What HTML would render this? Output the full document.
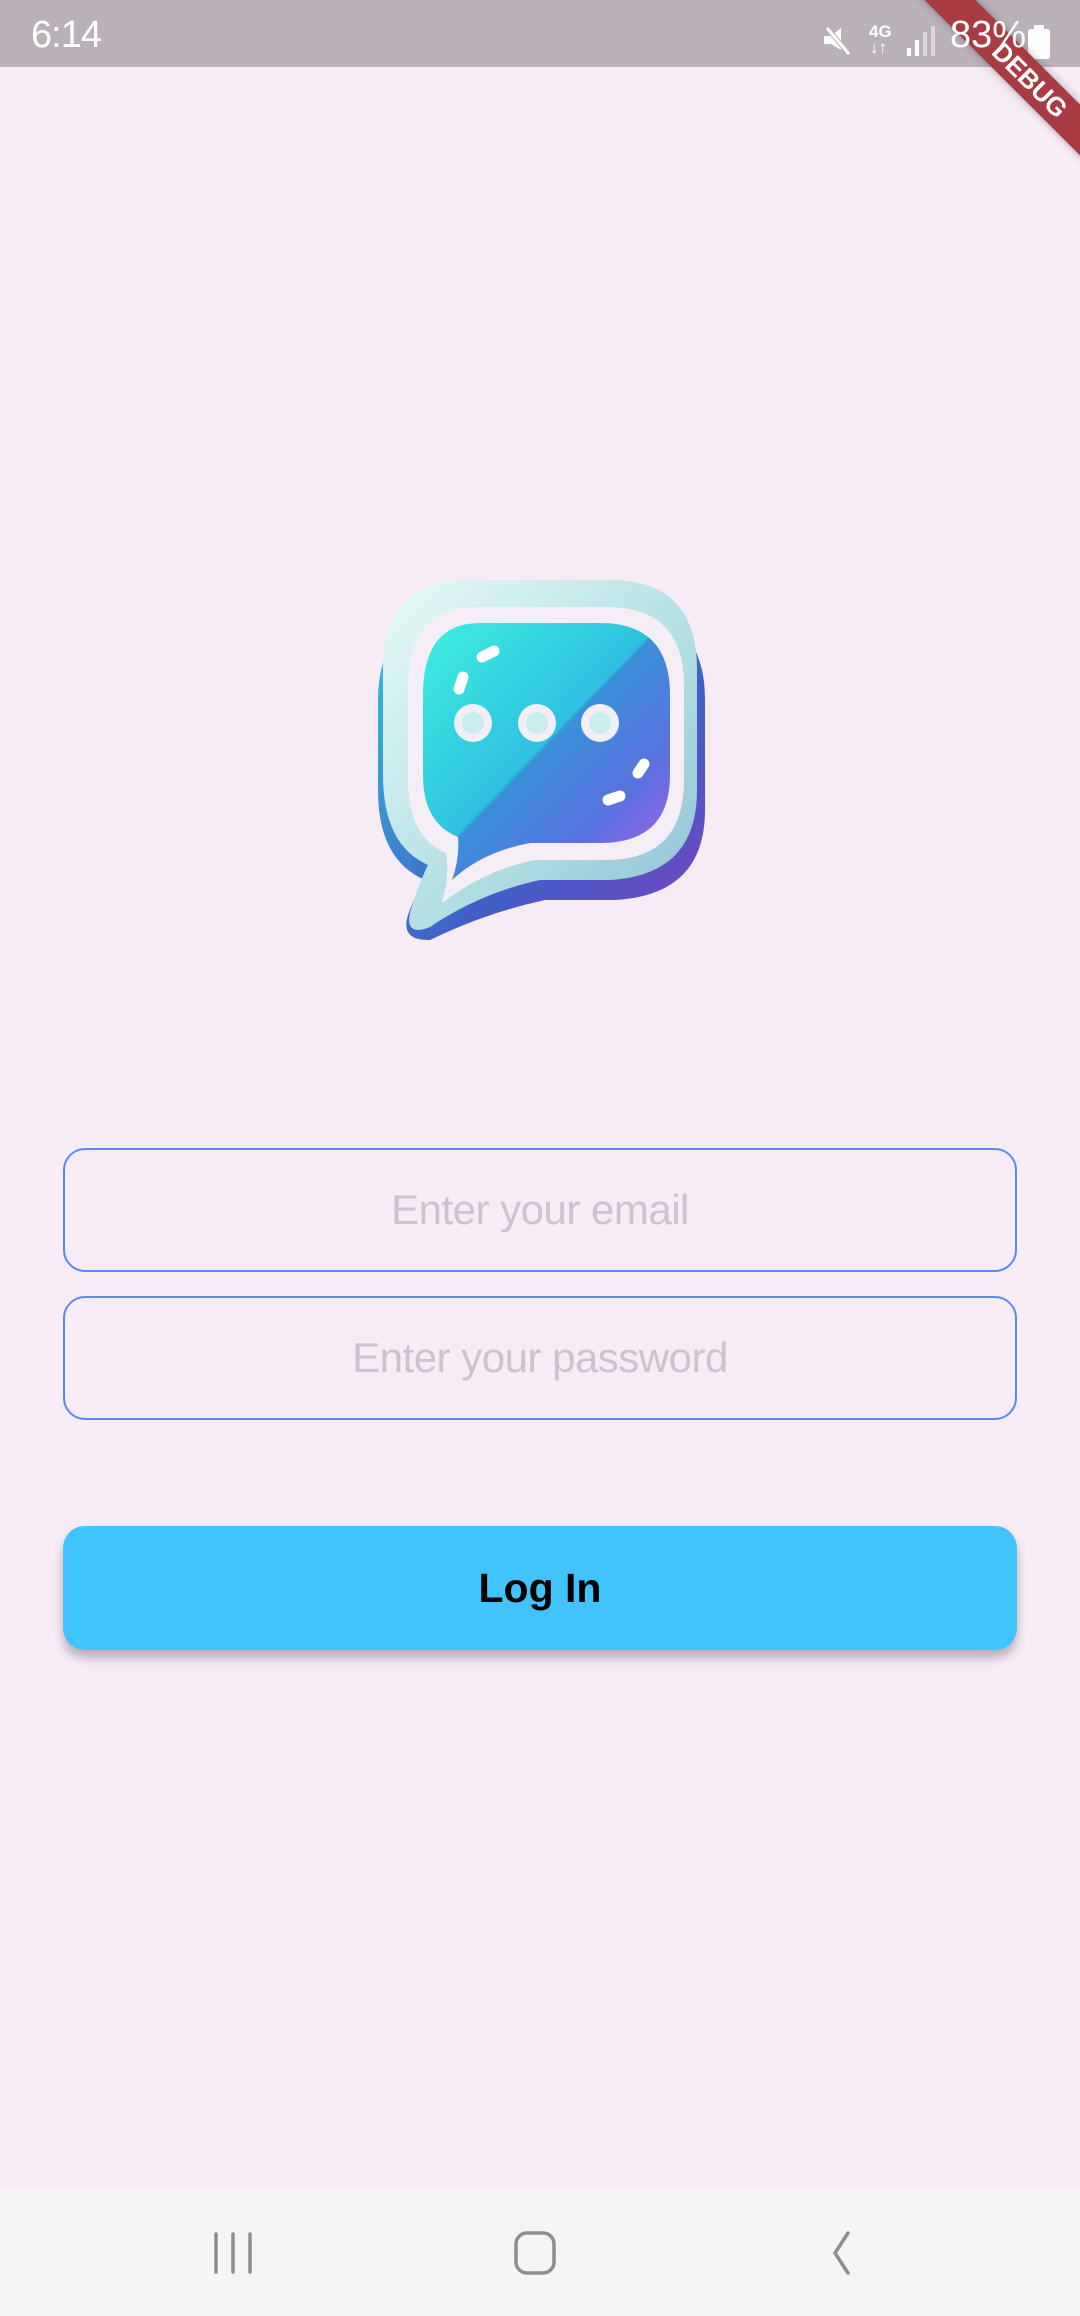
<!DOCTYPE html>
<html><head><meta charset="utf-8"><style>
*{margin:0;padding:0;box-sizing:border-box}
body{width:1080px;height:2316px;background:#f7ebf5;position:relative;overflow:hidden;font-family:"Liberation Sans",Roboto,sans-serif}
.sb{position:absolute;top:0;left:0;width:1080px;height:67px;background:#bab0b8;color:#fff}
.time{position:absolute;left:31px;top:14px;font-size:38px;letter-spacing:-1px}
.pct{position:absolute;left:950px;top:14px;font-size:38px;z-index:3}
.field{position:absolute;left:63px;width:954px;height:124px;border:2.5px solid #5a8ae8;border-radius:22px;color:#cbc3d0;font-size:42px;text-align:center;line-height:119px;letter-spacing:-0.5px}
.btn{position:absolute;left:63px;top:1526px;width:954px;height:124px;background:#41c4fe;border-radius:22px;box-shadow:0 8px 10px rgba(0,0,0,.25);text-align:center;line-height:124px;font-size:41px;font-weight:bold;color:#000}
.nav{position:absolute;left:0;top:2190px;width:1080px;height:126px;background:#f5f5f5}
.banner{position:absolute;left:880px;top:62px;width:300px;height:36px;background:#a83c42;transform:rotate(45deg);color:#fff;font-weight:bold;font-size:26px;text-align:center;line-height:36px;box-shadow:0 0 8px rgba(0,0,0,.3);z-index:2}
</style></head><body>
<div class="sb">
<div class="time">6:14</div>
<svg style="position:absolute;left:822px;top:26px" width="34" height="32" viewBox="0 0 34 32"><path d="M2 10h7l10-8v22L9 18H2z" fill="#fff"/><path d="M5 2l22 26" stroke="#bab0b8" stroke-width="5"/><path d="M5 2l22 26" stroke="#fff" stroke-width="3"/></svg>
<div style="position:absolute;left:869px;top:22px;font-size:17px;font-weight:bold;color:#fff">4G</div>
<div style="position:absolute;left:870px;top:38px;font-size:17px;font-weight:bold;color:#fff">↓↑</div>
<svg style="position:absolute;left:906px;top:26px" width="30" height="32"><rect x="1" y="22" width="4" height="8" fill="#fff"/><rect x="9" y="14" width="4" height="16" fill="#fff"/><rect x="17" y="6" width="4" height="24" fill="#fff" opacity=".5"/><rect x="25" y="0" width="4" height="30" fill="#fff" opacity=".5"/></svg>
<div class="pct">83%</div>
<svg style="position:absolute;left:1027px;top:25px" width="24" height="34"><rect x="7" y="0" width="10" height="4" fill="#fff"/><rect x="1" y="4" width="22" height="30" rx="3" fill="#fff"/></svg>
</div>
<div class="banner">DEBUG</div>

<svg style="position:absolute;left:370px;top:575px" width="340" height="366" viewBox="0 0 340 366">
<defs>
<linearGradient id="rim" x1="0" y1="0" x2="1" y2="1"><stop offset="0" stop-color="#e6fbf8"/><stop offset="0.6" stop-color="#b0dde2"/><stop offset="1" stop-color="#8ebfd6"/></linearGradient>
<linearGradient id="base" x1="0" y1="0" x2="1" y2="1"><stop offset="0" stop-color="#30c8e0"/><stop offset="0.6" stop-color="#4060c8"/><stop offset="1" stop-color="#7a40c0"/></linearGradient>
<linearGradient id="face" x1="0" y1="0" x2="1" y2="1"><stop offset="0" stop-color="#3ff0e0"/><stop offset="0.48" stop-color="#2ec0e0"/><stop offset="0.49" stop-color="#3a90d8"/><stop offset="0.75" stop-color="#5a70e0"/><stop offset="1" stop-color="#b060e8"/></linearGradient>
</defs>
<path d="M100 35 H245 Q335 35 335 125 V235 Q335 320 245 325 H175 Q115 338 60 365 Q30 366 38 340 Q45 320 55 305 Q8 285 8 215 V125 Q8 35 100 35 Z" fill="url(#base)"/>
<path d="M100 5 H240 Q327 5 327 95 V215 Q327 300 240 305 H170 Q110 318 60 352 Q35 362 40 338 Q48 310 58 290 Q13 270 13 200 V95 Q13 5 100 5 Z" fill="url(#rim)"/>
<path d="M105 32 H236 Q314 32 314 110 V205 Q314 285 236 285 H165 Q115 295 72 328 Q80 300 76 278 Q38 262 38 205 V110 Q38 32 105 32 Z" fill="#f5eef6"/>
<path d="M110 48 H230 Q300 48 300 120 V200 Q300 268 230 268 H160 Q112 277 82 305 Q90 282 88 262 Q53 248 53 200 V120 Q53 48 110 48 Z" fill="url(#face)"/>
<g fill="#f4eef6"><circle cx="103" cy="148" r="19"/><circle cx="167" cy="148" r="19"/><circle cx="230" cy="148" r="19"/></g>
<g fill="#c8eef0"><circle cx="103" cy="148" r="11"/><circle cx="167" cy="148" r="11"/><circle cx="230" cy="148" r="11"/></g>
<g stroke="#fff" stroke-width="11" stroke-linecap="round"><path d="M112 82l12-6"/><path d="M93 102l-4 12"/><path d="M268 198l6-9"/><path d="M238 225l12-4"/></g>
</svg>

<div class="field" style="top:1148px">Enter your email</div>
<div class="field" style="top:1296px">Enter your password</div>
<div class="btn">Log In</div>

<div class="nav">
<svg style="position:absolute;left:0;top:0" width="1080" height="126">
<g stroke="#8e8e8e" stroke-width="3.5" stroke-linecap="round" fill="none">
<path d="M216 44v38M233 44v38M250 44v38"/>
<rect x="516" y="43" width="38" height="40" rx="11"/>
<path d="M848 43l-13 20 13 20"/>
</g></svg>
</div>
</body></html>
